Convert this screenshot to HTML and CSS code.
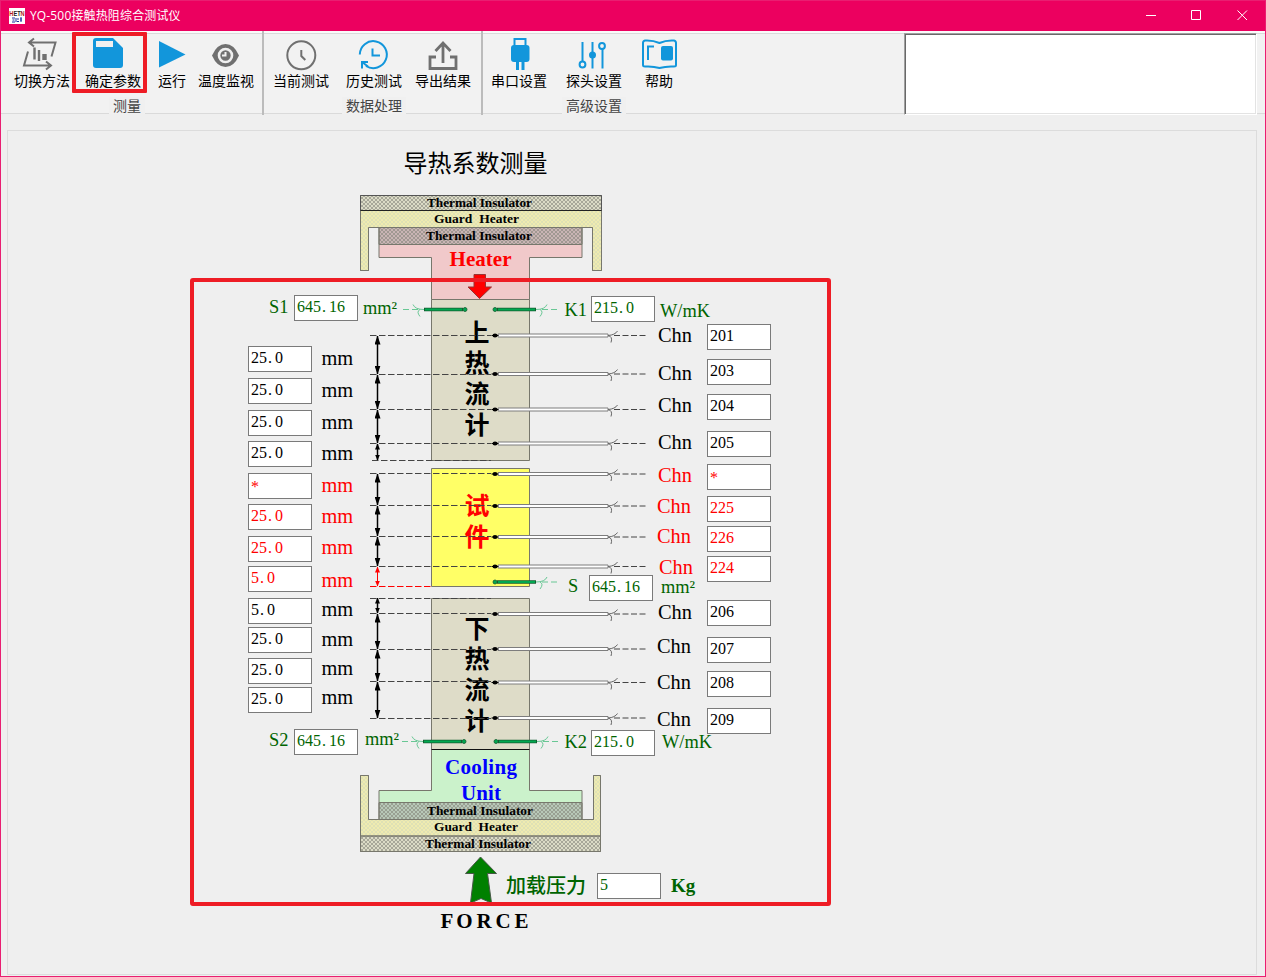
FILE: index.html
```html
<!DOCTYPE html>
<html lang="zh-CN">
<head>
<meta charset="utf-8">
<title>YQ-500接触热阻综合测试仪</title>
<link rel="stylesheet" href="styles.css">
</head>
<body>
<div class="window">
  <header class="titlebar">
    <svg class="logo" viewBox="0 0 16 16">
      <rect width="16" height="16" fill="#fff"/>
      <text x="0.3" y="7.6" textLength="15.4" lengthAdjust="spacingAndGlyphs"><tspan fill="#b01818">H</tspan><tspan fill="#222">ET</tspan><tspan fill="#b01818">N</tspan></text>
      <path d="M3 10h3M3.500 12h2M3 14h3M7 10v4M8 11h2M8 13.500h2M11 10h2M11 12h2M12 10v4" stroke="#1a2fa0" fill="none"/>
    </svg>
    <h1 class="title">YQ-500接触热阻综合测试仪</h1>
    <div class="controls">
      <svg viewBox="0 0 46 30"><path d="M11 15.500h10"/></svg>
      <svg viewBox="0 0 46 30"><path d="M10.500 10.500h9v9h-9z"/></svg>
      <svg viewBox="0 0 46 30"><path d="M10.500 10.500l9.500 9.500M20 10.500L10.500 20"/></svg>
    </div>
  </header>

  <nav class="ribbon">
    <section class="group group-measure">
      <div class="tools">
        <button class="tool">
          <svg viewBox="20 36 44 36" class="gray"><path d="M30 42.500h25.500L51.500 56.500M34 38.500l-5 4 5 4M28 51.500L24 65.500h26M46 61.500l5 4-5 4"/><path d="M34.500 47.500v12M39 50v11M43.500 54v6M45.500 54v6" stroke-width="2.400"/></svg>
          <span>切换方法</span>
        </button>
        <button class="tool confirm">
          <svg viewBox="91 36 44 36"><path d="M93 41q0-3 3-3h17l10 10v17q0 3-3 3H96q-3 0-3-3z" fill="#1296db"/><path d="M96 41h17v6H96z" fill="#f0f0f0"/></svg>
          <span>确定参数</span>
        </button>
        <button class="tool run">
          <svg viewBox="150 36 44 36"><path d="M159 41l26.500 13.500L159 67.500z" fill="#1296db"/></svg>
          <span>运行</span>
        </button>
        <button class="tool monitor">
          <svg viewBox="204 36 44 36"><path d="M212 55.500q5-11.500 13.500-11.500T239 55.500q-5 11.500-13.500 11.500T212 55.500z" fill="#707070"/><circle cx="225.500" cy="55.500" r="6.500" fill="#707070" stroke="#f0f0f0" stroke-width="2.600"/><path d="M225.500 52v3.500H222" fill="none" stroke="#f0f0f0" stroke-width="2"/></svg>
          <span>温度监视</span>
        </button>
      </div>
      <h2 class="group-name">测量</h2>
    </section>
    <section class="group group-data">
      <div class="tools">
        <button class="tool">
          <svg viewBox="279 36 44 36" class="gray"><circle cx="301.300" cy="55.300" r="14"/><path d="M301.300 50v6l4 4"/></svg>
          <span>当前测试</span>
        </button>
        <button class="tool history">
          <svg viewBox="352 36 44 36" class="blue"><path d="M359.800 54.500a13.500 13.500 0 1 1 6.200 11.500"/><path d="M372.500 48.500v7h7.500M362 68.500v-6.500h6M362 62l6 4.500"/></svg>
          <span>历史测试</span>
        </button>
        <button class="tool export">
          <svg viewBox="421 36 44 36" class="gray"><path d="M436 57h-6v11.500h26V57h-6M443 63V44M435.500 51l7.500-8 7.500 8" stroke-width="2.800"/></svg>
          <span>导出结果</span>
        </button>
      </div>
      <h2 class="group-name">数据处理</h2>
    </section>
    <section class="group group-advanced">
      <div class="tools">
        <button class="tool">
          <svg viewBox="497 36 44 36"><path d="M514.500 46v-7h11v7" fill="none" stroke="#1296db" stroke-width="2"/><rect x="511" y="45" width="18.500" height="17" rx="3" fill="#1296db"/><path d="M517.500 61v9M523 61v9" stroke="#1296db" stroke-width="3"/></svg>
          <span>串口设置</span>
        </button>
        <button class="tool probe-set">
          <svg viewBox="572 36 44 36" class="blue"><path d="M582.500 42v19.500M592.500 42v26.500M602.500 49v19.500"/><circle cx="582.500" cy="64.500" r="2.900"/><circle cx="592.500" cy="55" r="2.500" fill="#1296db"/><circle cx="602" cy="46" r="2.900"/></svg>
          <span>探头设置</span>
        </button>
        <button class="tool help">
          <svg viewBox="637 36 44 36" class="blue"><path d="M659.500 43q-7-3-14.500-2.500q-2 .5-2 2.500v22q0 1.500 2 1.500q8-.5 14.500 1.500q7-2 14.500-1.500q2 0 2-1.500V43q0-2-2-2.500q-8-.5-14.500 2.500z"/><path d="M648 60V46.500h6"/><rect x="661" y="46" width="12" height="14.500" rx="2" fill="#1296db" stroke="none"/></svg>
          <span>帮助</span>
        </button>
      </div>
      <h2 class="group-name">高级设置</h2>
    </section>
    <div class="memo"></div>
  </nav>

  <main class="panel">
    <svg class="diagram" viewBox="8 131 1248 843">
      <defs>
        <pattern id="weave" width="4" height="4" patternUnits="userSpaceOnUse"><path d="M-1 -1l6 6M5 -1l-6 6" stroke="#85857a" stroke-width=".6"/></pattern>
        <pattern id="fine" width="4" height="4" patternUnits="userSpaceOnUse"><path d="M-1 -1l6 6M5 -1l-6 6" stroke="#d8dcb8" stroke-width=".7"/></pattern>
        <marker id="tip" viewBox="0 0 9 6" refX="8.500" refY="3" markerWidth="9" markerHeight="6" markerUnits="userSpaceOnUse" orient="auto-start-reverse"><path d="M0 0l9 3-9 3z"/></marker>
        <marker id="tip-small" viewBox="0 0 6 5" refX="5.500" refY="2.500" markerWidth="6" markerHeight="5" markerUnits="userSpaceOnUse" orient="auto-start-reverse"><path d="M0 0l6 2.500-6 2.500z"/></marker>
        <marker id="tip-red" viewBox="0 0 6 5" refX="5.500" refY="2.500" markerWidth="6" markerHeight="5" markerUnits="userSpaceOnUse" orient="auto-start-reverse"><path d="M0 0l6 2.500-6 2.500z" fill="red"/></marker>
        <g id="probe">
          <path d="M498-1.500h110v3H498z" fill="#fff" stroke="#7d7d7d"/>
          <ellipse cx="495" rx="2.500" ry="2.100"/><path d="M491.500 0h7" stroke="#000"/>
          <path d="M608 0q7-.5 9.500-4.500M608 0q5 1 3 7" fill="none" stroke="#666"/>
          <path d="M614 0h34" stroke="#444" stroke-dasharray="6 2.500"/>
        </g>
        <g id="sensor">
          <path d="M2 0h39" stroke="#145c30" stroke-width="3.400"/><path d="M3 0h37" stroke="#00a850" stroke-width="1.800"/>
          <circle r="2" fill="#00a850" stroke="#145c30" stroke-width=".8"/>
          <path d="M41 0q9 0 11-5M45 0q4 2 0 7" fill="none" stroke="#69c795"/>
          <path d="M47 0h15" stroke="#69c795" stroke-dasharray="6 3"/>
        </g>
      </defs>

      <text class="heading" x="403.500" y="171.500">导热系数测量</text>

      <g stroke="#77776c">
        <path d="M360.500 210.500h241v60h-9V227.500h-224v43h-8z" fill="#efebb0"/>
        <path d="M360.500 210.500h241v60h-9V227.500h-224v43h-8z" fill="url(#fine)"/>
        <path d="M360.500 195.500h241v15h-241z" fill="#dbdbc6"/><path d="M360.500 195.500h241v15h-241z" fill="url(#weave)" stroke="#555"/>
        <path d="M360.500 210.500h241" stroke="#222"/>
        <path d="M379 244.500h203v13h-52.500v42h-98v-42H379z" fill="#f1c9ca"/>
        <path d="M379 227.500h203v17H379z" fill="#c9b4b4"/><path d="M379 227.500h203v17H379z" fill="url(#weave)"/>
        <path d="M431.500 299.500h98v161h-98zM431.500 598.500h98v151h-98z" fill="#dedcc8"/>
        <path d="M431.500 468.500h98v118h-98z" fill="#ffff66"/>
        <path d="M431.500 749.500h98v41H582v12H379v-12h52.500z" fill="#cbf2cb"/>
        <path d="M431.500 749.500h98" stroke="#111"/>
        <path d="M379 802.500h203v17H379z" fill="#b8c8b8"/><path d="M379 802.500h203v17H379z" fill="url(#weave)"/>
        <path d="M360.500 775.500h8v44h225v-44h7v61h-240z" fill="#efebb0"/><path d="M360.500 775.500h8v44h225v-44h7v61h-240z" fill="url(#fine)"/>
        <path d="M360.500 836h240v15.500h-240z" fill="#dbdbc6"/><path d="M360.500 836h240v15.500h-240z" fill="url(#weave)"/>
      </g>
      <path d="M474 274.500h11.500V287h6l-12 11.500-11.500-11.500h6z" fill="red" stroke="#933"/>
      <path d="M480.500 857l16 16.500h-9l4 29.500-10.500-4.500-10.500 4.500 3.500-29.500h-8.500z" fill="#008000" stroke="#465846"/>

      <g class="small">
        <text x="427" y="206.500" textLength="105" lengthAdjust="spacingAndGlyphs">Thermal Insulator</text>
        <text x="434" y="222.500" textLength="85" lengthAdjust="spacingAndGlyphs">Guard&#160; Heater</text>
        <text x="426" y="239.500" textLength="106" lengthAdjust="spacingAndGlyphs">Thermal Insulator</text>
        <text x="427" y="814.500" textLength="106" lengthAdjust="spacingAndGlyphs">Thermal Insulator</text>
        <text x="434" y="831" textLength="84" lengthAdjust="spacingAndGlyphs">Guard&#160; Heater</text>
        <text x="425" y="848" textLength="106" lengthAdjust="spacingAndGlyphs">Thermal Insulator</text>
      </g>
      <g class="unit-name">
        <text x="449.500" y="265.500" textLength="62" fill="red">Heater</text>
        <text x="445" y="774" textLength="72" fill="#00f">Cooling</text>
        <text x="461" y="799.500" textLength="40" fill="#00f">Unit</text>
        <text x="440.500" y="927.500" textLength="88">F O R C E</text>
      </g>

      <g class="vertical">
        <text x="464.500" y="341.500">上</text><text x="464.500" y="372">热</text><text x="464.500" y="403">流</text><text x="464.500" y="433.500">计</text>
        <text x="464.500" y="515" class="red">试</text><text x="464.500" y="545.500" class="red">件</text>
        <text x="464.500" y="637.500">下</text><text x="464.500" y="668">热</text><text x="464.500" y="699">流</text><text x="464.500" y="730">计</text>
      </g>

      <path class="dash" d="M370 335.500h121M370 374.500h121M370 409.500h121M370 443.500h121M372 460.500h119M370 473.500h121M370 505.500h121M370 536.500h121M370 566.500h121M370 598.500h121M370 613.500h121M370 649.500h121M370 681.500h121M370 718.500h121"/>
      <path class="dash dash-red" d="M370 586.500h61"/>
      <g class="span">
        <path d="M377.500 336v38"/><path d="M377.500 375v34"/><path d="M377.500 410v33"/>
        <path d="M377.500 474v31"/><path d="M377.500 506v30"/><path d="M377.500 537v29"/>
        <path d="M377.500 614v35"/><path d="M377.500 650v31"/><path d="M377.500 682v36"/>
      </g>
      <g class="span span-small"><path d="M377.500 444v16"/><path d="M377.500 598v15"/></g>
      <path class="span-red" d="M377.500 567v19"/>

      <use href="#probe" y="335.500"/><use href="#probe" y="374"/><use href="#probe" y="409.500"/><use href="#probe" y="443.500"/>
      <use href="#probe" y="474"/><use href="#probe" y="506"/><use href="#probe" y="537"/><use href="#probe" y="566.500"/>
      <use href="#probe" y="614"/><use href="#probe" y="649"/><use href="#probe" y="682.500"/><use href="#probe" y="718"/>
      <use href="#sensor" transform="translate(495 309.500)"/><use href="#sensor" transform="translate(465 309.500) scale(-1 1)"/>
      <use href="#sensor" transform="translate(496 741.500)"/><use href="#sensor" transform="translate(464 741.500) scale(-1 1)"/>
      <use href="#sensor" transform="translate(495 582)"/>

      <g class="label">
        <text x="321.500" y="364.500">mm</text><text x="321.500" y="396.500">mm</text><text x="321.500" y="428.500">mm</text><text x="321.500" y="459.500">mm</text>
        <g class="red"><text x="321.500" y="491.500">mm</text><text x="321.500" y="522.500">mm</text><text x="321.500" y="553.500">mm</text><text x="321.500" y="586.500">mm</text></g>
        <text x="321.500" y="615.500">mm</text><text x="321.500" y="645.500">mm</text><text x="321.500" y="674.500">mm</text><text x="321.500" y="703.500">mm</text>
        <text x="658" y="342">Chn</text><text x="658" y="380">Chn</text><text x="658" y="412">Chn</text><text x="658" y="449">Chn</text>
        <g class="red"><text x="658" y="482">Chn</text><text x="657" y="513">Chn</text><text x="657" y="543">Chn</text><text x="659" y="574">Chn</text></g>
        <text x="658" y="619">Chn</text><text x="657" y="653">Chn</text><text x="657" y="689">Chn</text><text x="657" y="726">Chn</text>
      </g>
      <g class="label green">
        <text x="269" y="312.500">S1</text><text x="363" y="314">mm²</text><text x="564.500" y="316">K1</text><text x="660" y="317">W/mK</text>
        <text x="568" y="592">S</text><text x="661" y="593">mm²</text>
        <text x="269" y="746">S2</text><text x="365" y="745">mm²</text><text x="564.500" y="748">K2</text><text x="662" y="748">W/mK</text>
        <text class="load" x="506" y="892.500">加载压力</text><text class="kg" x="671" y="892">Kg</text>
      </g>
      <rect class="outline" x="192" y="280" width="637" height="624" rx="1"/>
    </svg>

    <div class="field" style="--x:248;--y:346">25<i>.</i>0</div>
    <div class="field" style="--x:248;--y:378">25<i>.</i>0</div>
    <div class="field" style="--x:248;--y:410">25<i>.</i>0</div>
    <div class="field" style="--x:248;--y:441">25<i>.</i>0</div>
    <div class="field red star" style="--x:248;--y:473">*</div>
    <div class="field red" style="--x:248;--y:504">25<i>.</i>0</div>
    <div class="field red" style="--x:248;--y:536">25<i>.</i>0</div>
    <div class="field red" style="--x:248;--y:566">5<i>.</i>0</div>
    <div class="field" style="--x:248;--y:598">5<i>.</i>0</div>
    <div class="field" style="--x:248;--y:627">25<i>.</i>0</div>
    <div class="field" style="--x:248;--y:658">25<i>.</i>0</div>
    <div class="field" style="--x:248;--y:687">25<i>.</i>0</div>

    <div class="field" style="--x:707;--y:324">201</div>
    <div class="field" style="--x:707;--y:359">203</div>
    <div class="field" style="--x:707;--y:394">204</div>
    <div class="field" style="--x:707;--y:431">205</div>
    <div class="field red star" style="--x:707;--y:464">*</div>
    <div class="field red" style="--x:707;--y:496">225</div>
    <div class="field red" style="--x:707;--y:526">226</div>
    <div class="field red" style="--x:707;--y:556">224</div>
    <div class="field" style="--x:707;--y:600">206</div>
    <div class="field" style="--x:707;--y:637">207</div>
    <div class="field" style="--x:707;--y:671">208</div>
    <div class="field" style="--x:707;--y:708">209</div>

    <div class="field green" style="--x:294;--y:295">645<i>.</i>16</div>
    <div class="field green" style="--x:591;--y:296">215<i>.</i>0</div>
    <div class="field green" style="--x:589;--y:575">645<i>.</i>16</div>
    <div class="field green" style="--x:294;--y:729">645<i>.</i>16</div>
    <div class="field green" style="--x:591;--y:730">215<i>.</i>0</div>
    <div class="field green" style="--x:597;--y:873">5</div>
  </main>
</div>
</body>
</html>
```
FILE: styles.css
```css
*, *::after { box-sizing: border-box; }
body { margin: 0; font-family: "Open Sans", "Noto Sans CJK SC", sans-serif; }
h1, h2 { margin: 0; font-weight: 400; }

.window {
  display: flex;
  flex-direction: column;
  width: 1266px;
  height: 977px;
  border: 1px solid #e91e71;
  background: #efefef;
  overflow: hidden;
}

.titlebar {
  display: flex;
  align-items: center;
  flex: none;
  height: 30px;
  padding-left: 8px;
  background: #ec005f;
  color: #fff;
}
.logo { width: 16px; height: 16px; font: bold 7px "Liberation Sans", sans-serif; }
.title { margin-left: 5px; font-size: 12px; line-height: 28px; letter-spacing: .15px; }
.controls { display: flex; margin-left: auto; margin-right: -8px; }
.controls svg { width: 46px; height: 30px; margin-top: -2px; fill: none; stroke: #fff; }

.ribbon {
  position: relative;
  display: flex;
  flex: none;
  height: 84px;
  background: linear-gradient(#fafafa 0 2px, #dadada 2px 3px, #f2f2f2 3px 82px, #dadada 82px 83px, #efefef 83px);
}
.group { display: flex; flex-direction: column; align-items: center; }
.group-measure { width: 261px; }
.group-data { width: 219px; border-left: 2px solid #bcbcbc; }
.group-advanced { width: 422px; border-left: 2px solid #bcbcbc; }
.tools { display: flex; align-self: flex-start; padding-top: 5px; }
.group-measure .tools { padding-left: 13px; }
.group-data .tools { padding-left: 9px; }
.group-advanced .tools { padding-left: 8px; }

.tool {
  position: relative;
  display: flex;
  flex-direction: column;
  align-items: center;
  width: 56px;
  padding: 0;
  border: 0;
  background: none;
  color: #000;
  font: 14px/16px "Noto Sans CJK SC", sans-serif;
  white-space: nowrap;
}
.tool svg { flex: none; width: 44px; height: 36px; }
.tool .gray { fill: none; stroke: #707070; stroke-width: 2; }
.tool .blue { fill: none; stroke: #1296db; stroke-width: 2; }
.confirm { margin-left: 15px; }
.confirm::after {
  content: "";
  position: absolute;
  left: -13px;
  top: -4px;
  width: 75px;
  height: 61px;
  border: 4px solid #ee1c25;
  border-radius: 1px;
}
.run { width: 28px; margin-left: 17px; }
.monitor { margin-left: 12px; }
.history { margin-left: 17px; }
.export { margin-left: 13px; }
.probe-set { margin-left: 19px; }
.help { width: 28px; margin-left: 23px; }

.group-name {
  height: 17px;
  margin-top: 9px;
  padding: 0 4px;
  background: #f0f0f0;
  color: #444;
  font: 14px/17px "Noto Sans CJK SC", sans-serif;
}
.group-measure .group-name { margin-right: 9px; }
.group-data .group-name { margin-left: 3px; }
.group-advanced .group-name { align-self: flex-start; margin-left: 79px; }

.memo {
  width: 353px;
  height: 82px;
  margin-top: 2px;
  margin-left: 1px;
  border: 1px solid;
  border-color: #a0a0a0 #fff #fff #a0a0a0;
  background: #fff;
  box-shadow: inset 1px 1px #696969, inset -1px -1px #e3e3e3;
}

.panel {
  position: relative;
  flex: none;
  width: 1250px;
  height: 845px;
  margin: 15px 0 0 6px;
  border: 1px solid #dcdcdc;
}
.diagram { display: block; width: 1248px; height: 843px; font-family: "Liberation Serif", serif; }
.heading { font: 24px "Noto Sans CJK SC", sans-serif; }
.small { font-size: 12px; font-weight: 700; }
.unit-name { font-size: 21px; font-weight: 700; }
.vertical { font: 700 25px "Liberation Sans", "Noto Sans CJK SC", sans-serif; }
.label { font-size: 20.400px; }
.label.green { font-size: 18.400px; }
.label .load { font: 500 20px "Noto Sans CJK SC", sans-serif; }
.label .kg { font-size: 19px; font-weight: 700; }
.red { color: #f00; fill: #f00; }
.green { color: #006400; fill: #006400; }
.dash { fill: none; stroke: #444; stroke-dasharray: 6.500 2.500; }
.dash-red { stroke: #f00; }
.span { stroke: #000; stroke-width: 1.500; }
.span path { marker-start: url(#tip); marker-end: url(#tip); }
.span-small path { marker-start: url(#tip-small); marker-end: url(#tip-small); }
.span-red { stroke: #f00; marker-start: url(#tip-red); marker-end: url(#tip-red); }
.outline { fill: none; stroke: #ee1c25; stroke-width: 4; }

.field {
  position: absolute;
  left: calc((var(--x) - 8) * 1px);
  top: calc((var(--y) - 131) * 1px);
  width: 64px;
  height: 26px;
  padding-left: 2px;
  border: 1px solid #7a7a7a;
  background: #fff;
  font: 16px/22px "Liberation Serif", serif;
}
.field i { display: inline-block; width: 8px; padding-left: 1px; font-style: normal; }
.star { line-height: 25px; }
```
